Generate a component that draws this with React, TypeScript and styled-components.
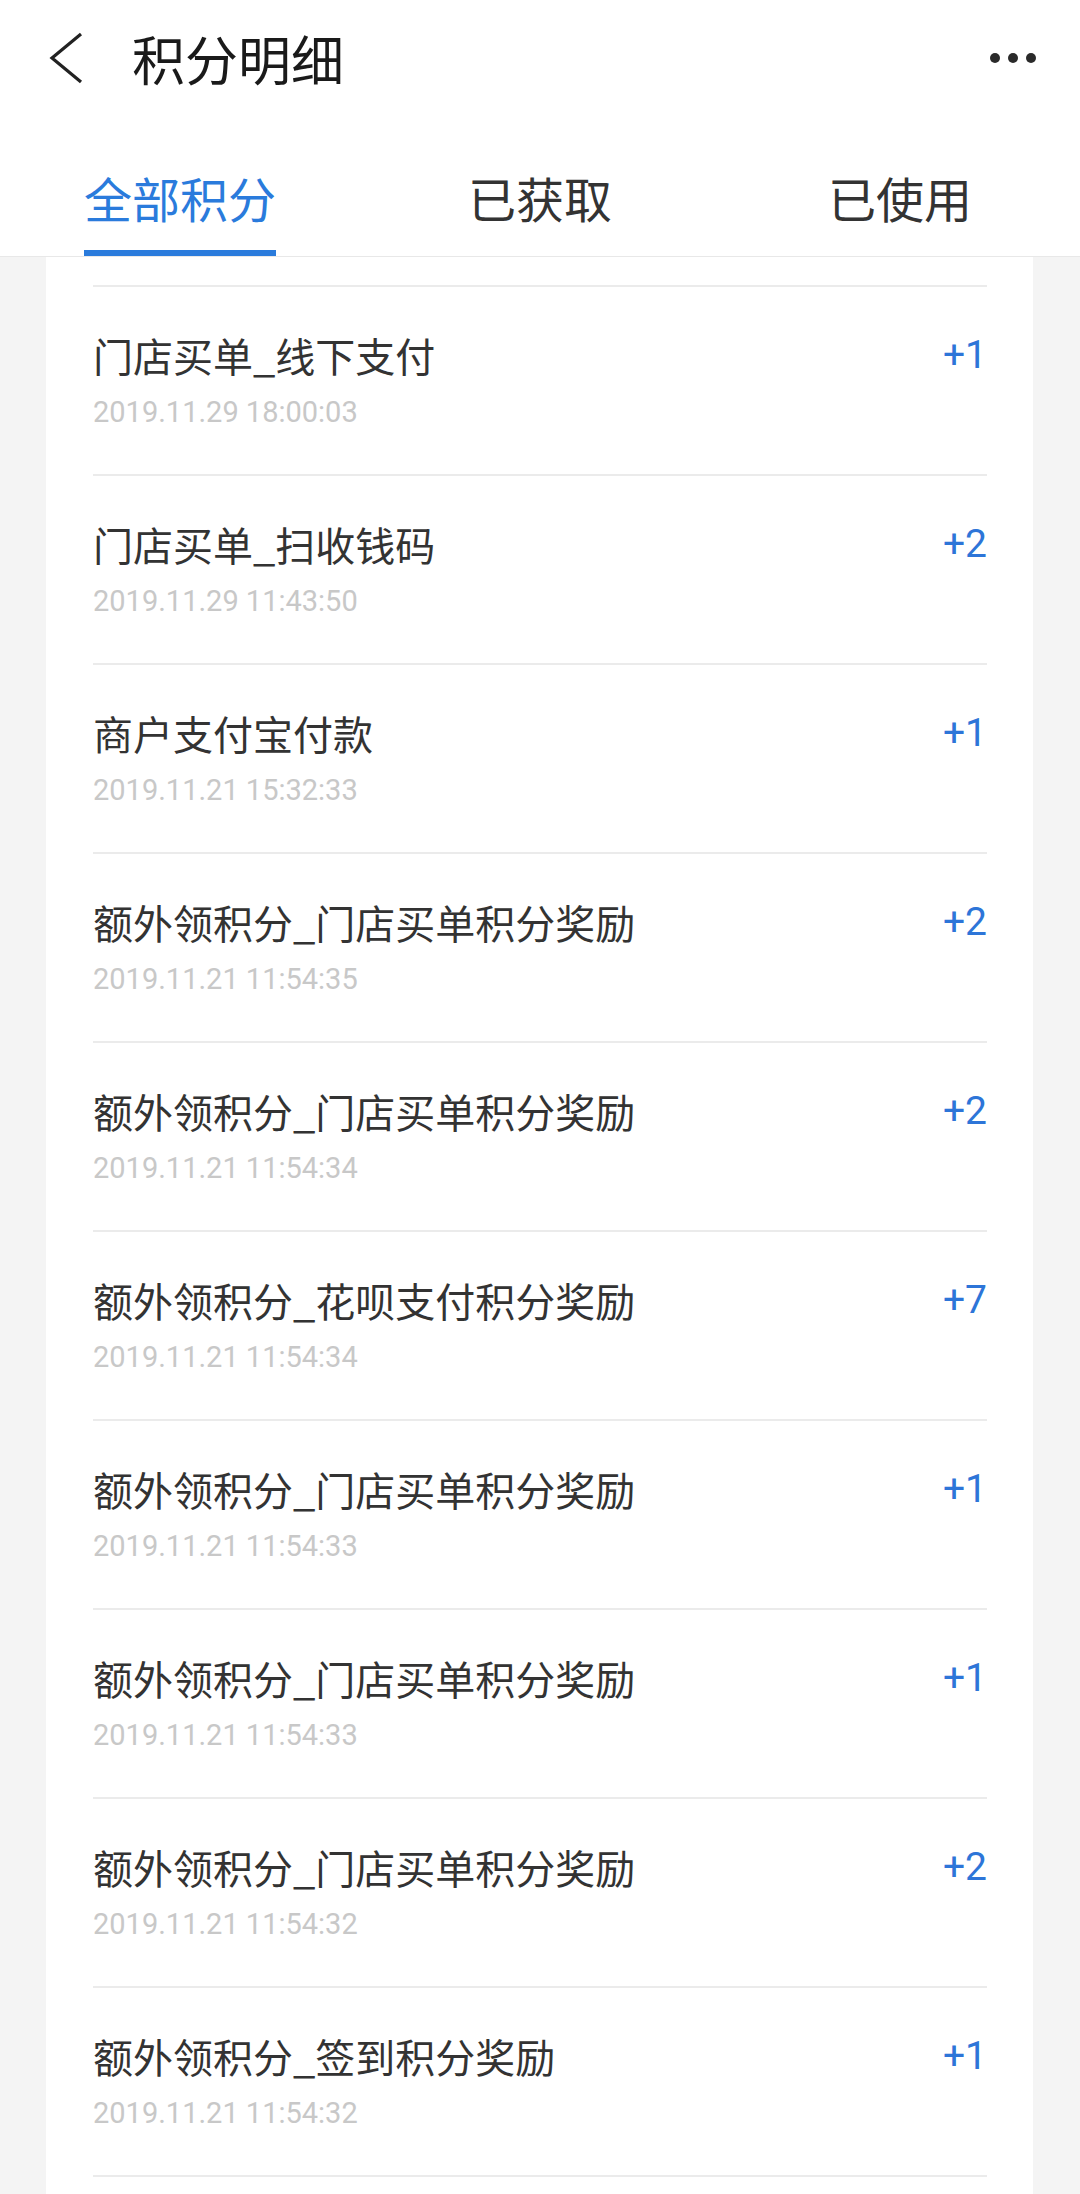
import styled, { createGlobalStyle } from 'styled-components'

const GlobalStyle = createGlobalStyle`
  body {
    margin: 0;
    background: #f4f4f4;
    font-family: Roboto, "Noto Sans CJK SC", sans-serif;
  }
`

interface IRecord { title: string; time: string; points: number }

const records: IRecord[] = [
  { title: '门店买单_线下支付', time: '2019.11.29 18:00:03', points: 1 },
  { title: '门店买单_扫收钱码', time: '2019.11.29 11:43:50', points: 2 },
  { title: '商户支付宝付款', time: '2019.11.21 15:32:33', points: 1 },
  { title: '额外领积分_门店买单积分奖励', time: '2019.11.21 11:54:35', points: 2 },
  { title: '额外领积分_门店买单积分奖励', time: '2019.11.21 11:54:34', points: 2 },
  { title: '额外领积分_花呗支付积分奖励', time: '2019.11.21 11:54:34', points: 7 },
  { title: '额外领积分_门店买单积分奖励', time: '2019.11.21 11:54:33', points: 1 },
  { title: '额外领积分_门店买单积分奖励', time: '2019.11.21 11:54:33', points: 1 },
  { title: '额外领积分_门店买单积分奖励', time: '2019.11.21 11:54:32', points: 2 },
  { title: '额外领积分_签到积分奖励', time: '2019.11.21 11:54:32', points: 1 },
]

const tabs = ['全部积分', '已获取', '已使用']

const Page = styled.div`
  width: 1080px;
  min-height: 2194px;
`

const Header = styled.header`
  background: #fff;
  border-bottom: 1px solid #e8e8e8;
`

const NavBar = styled.div`
  height: 116px;
  display: flex;
  align-items: center;
  padding: 0 44px 0 48px;
`

const BackButton = styled.svg`
  width: 36px;
  height: 52px;
  flex: none;
`

const Title = styled.h1`
  margin: 0 0 0 48px;
  flex: 1;
  font-family: "Noto Sans CJK SC", sans-serif;
  font-weight: 400;
  font-size: 53px;
  line-height: 60px;
  color: #1a1a1a;
`

const MoreButton = styled.div`
  display: flex;
  gap: 8px;
`

const Dot = styled.span`
  width: 10px;
  height: 10px;
  border-radius: 50%;
  background: #2a2a2a;
`

const TabBar = styled.div`
  height: 140px;
  display: flex;
`

const Tab = styled.div`
  flex: 1;
  display: flex;
  justify-content: center;
  align-items: flex-end;
`

const TabLabel = styled.span<{ $active?: boolean }>`
  font-family: "Noto Sans CJK SC", sans-serif;
  font-size: 48px;
  line-height: 56px;
  padding-bottom: 25px;
  border-bottom: 6px solid ${p => (p.$active ? '#2a7bdc' : 'transparent')};
  color: ${p => (p.$active ? '#2a7bdc' : '#333')};
`

const Card = styled.section`
  margin: 0 47px 0 46px;
  padding: 28px 46px 60px 47px;
  background: #fff;
`

const Row = styled.div`
  height: 189px;
  box-sizing: border-box;
  border-top: 2px solid #ebebeb;
  padding-top: 42px;
  display: grid;
  grid-template-columns: 1fr auto;
  grid-template-rows: 52px 40px;
  row-gap: 11px;
  align-items: center;
`

const LastLine = styled.div`
  border-top: 2px solid #ebebeb;
`

const ItemTitle = styled.div`
  font-family: "Noto Sans CJK SC", sans-serif;
  font-size: 40px;
  line-height: 52px;
  color: #333;
`

const Points = styled.div`
  font-family: Roboto, sans-serif;
  font-size: 39px;
  line-height: 52px;
  color: #2d75d8;
`

const Time = styled.div`
  grid-column: 1 / 3;
  font-family: Roboto, sans-serif;
  font-size: 29px;
  line-height: 40px;
  color: #c8c8c8;
`

const App = () => {
  return (
    <Page>
      <GlobalStyle />
      <Header>
        <NavBar>
          <BackButton viewBox="0 0 36 52">
            <path d="M33 2 L4 26 L33 50" fill="none" stroke="#222" strokeWidth="3.2" strokeLinejoin="miter" />
          </BackButton>
          <Title>积分明细</Title>
          <MoreButton>
            <Dot /><Dot /><Dot />
          </MoreButton>
        </NavBar>
        <TabBar>
          {tabs.map((t, i) => (
            <Tab key={t}>
              <TabLabel $active={i === 0}>{t}</TabLabel>
            </Tab>
          ))}
        </TabBar>
      </Header>
      <Card>
        {records.map((r, i) => (
          <Row key={i}>
            <ItemTitle>{r.title}</ItemTitle>
            <Points>+{r.points}</Points>
            <Time>{r.time}</Time>
          </Row>
        ))}
        <LastLine />
      </Card>
    </Page>
  )
}

export default App
